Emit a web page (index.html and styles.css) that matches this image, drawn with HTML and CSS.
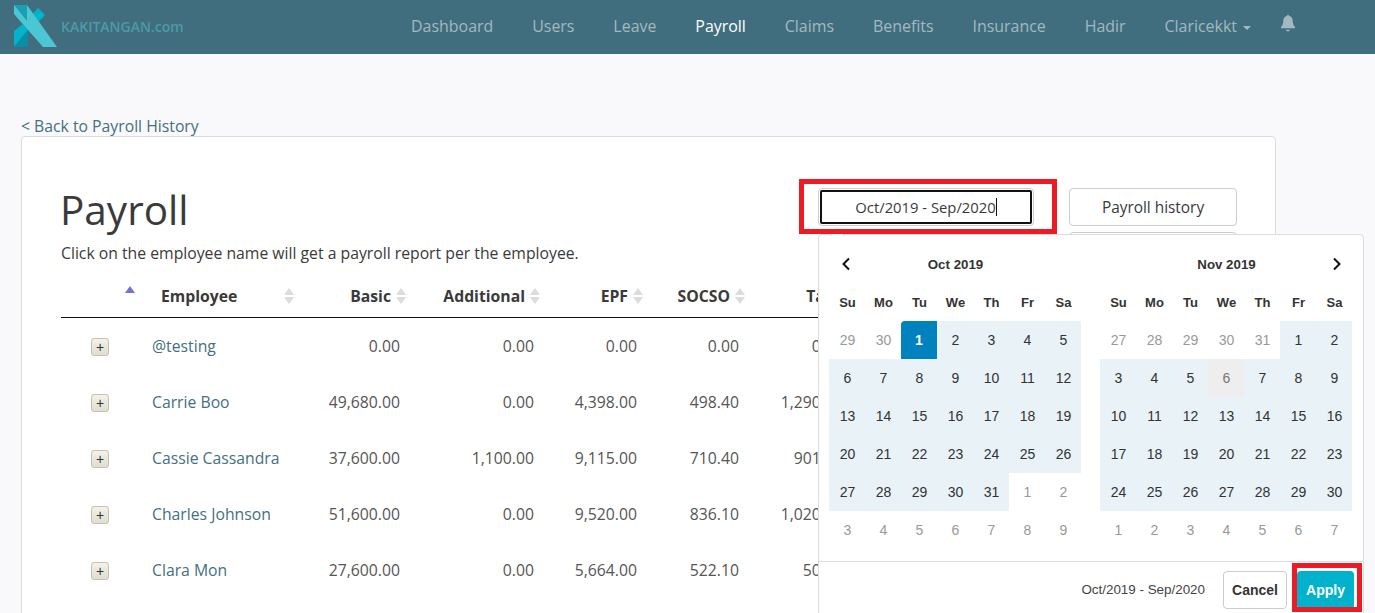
FILE: index.html
```html
<!DOCTYPE html>
<html lang="en">
<head>
<meta charset="utf-8">
<title>Payroll</title>
<link rel="stylesheet" href="styles.css">
</head>
<body>
<header class="nav">
  <a class="brand" href="#">
    <svg class="logo" width="44" height="44" viewBox="0 0 44 44" aria-hidden="true">
      <polygon fill="#00b4cd" points="24,3 31,10 19,23 13,15"/>
      <polygon fill="#00b4cd" points="0,26 9,19 14,25 0,42"/>
      <polygon fill="#0a8ea3" points="0,42 14,25 14,42"/>
      <polygon fill="#4cc6d3" points="0,0 13,0 43,42 29,42 0,9"/>
      <polygon fill="#1b9fb3" points="0,0 13,0 13,16"/>
    </svg>
    <span class="brand-text">KAKITANGAN.com</span>
  </a>
  <nav class="menu">
    <a href="#">Dashboard</a>
    <a href="#">Users</a>
    <a href="#">Leave</a>
    <a href="#" class="current">Payroll</a>
    <a href="#">Claims</a>
    <a href="#">Benefits</a>
    <a href="#">Insurance</a>
    <a href="#">Hadir</a>
    <a href="#" class="user">Claricekkt <i class="caret"></i></a>
    <a href="#" class="bell" aria-label="Notifications">
      <svg width="16" height="17" viewBox="0 0 16 17" aria-hidden="true"><path fill="#a3b9c1" d="M8 0c.7 0 1.2.5 1.2 1.1 2.2.5 3.3 2.2 3.5 4.6.2 2.800.6 4.600 2.300 6.300v1.200H1v-1.200c1.700-1.700 2.100-3.500 2.300-6.300.2-2.400 1.300-4.100 3.500-4.600C6.800.5 7.300 0 8 0zM5.800 14.700h4.400C10 15.600 9.100 16.200 8 16.200s-2-.6-2.200-1.500z"/></svg>
    </a>
  </nav>
</header>

<main class="page">
  <a class="back" href="#">&lt; Back to Payroll History</a>
  <section class="card">
    <div class="top">
      <div class="intro">
        <h1>Payroll</h1>
        <p>Click on the employee name will get a payroll report per the employee.</p>
      </div>
      <div class="range-wrap">
        <div class="range-input"><span>Oct/2019 - Sep/2020</span><i class="cursor"></i></div>
        <div class="red-box range-red"></div>
      </div>
      <div class="actions">
        <a class="btn" href="#">Payroll history</a>
        <a class="btn" href="#">&nbsp;</a>
      </div>
    </div>

    <table class="grid">
      <colgroup>
        <col class="c0"><col class="c1"><col class="c2"><col class="c3"><col class="c4"><col class="c5"><col class="c6">
      </colgroup>
      <thead>
        <tr>
          <th class="sort-first"><i class="tri"></i></th>
          <th class="emp"><div class="th"><span>Employee</span><i class="sort"></i></div></th>
          <th><div class="th"><span>Basic</span><i class="sort"></i></div></th>
          <th><div class="th"><span>Additional</span><i class="sort"></i></div></th>
          <th><div class="th"><span>EPF</span><i class="sort"></i></div></th>
          <th><div class="th"><span>SOCSO</span><i class="sort"></i></div></th>
          <th><div class="th"><span>Tax</span><i class="sort"></i></div></th>
        </tr>
      </thead>
      <tbody>
        <tr><td class="tg"><button class="plus">+</button></td><td class="name"><a href="#">@testing</a></td><td>0.00</td><td>0.00</td><td>0.00</td><td>0.00</td><td>0.00</td></tr>
        <tr><td class="tg"><button class="plus">+</button></td><td class="name"><a href="#">Carrie Boo</a></td><td>49,680.00</td><td>0.00</td><td>4,398.00</td><td>498.40</td><td>1,290.00</td></tr>
        <tr><td class="tg"><button class="plus">+</button></td><td class="name"><a href="#">Cassie Cassandra</a></td><td>37,600.00</td><td>1,100.00</td><td>9,115.00</td><td>710.40</td><td>901.00</td></tr>
        <tr><td class="tg"><button class="plus">+</button></td><td class="name"><a href="#">Charles Johnson</a></td><td>51,600.00</td><td>0.00</td><td>9,520.00</td><td>836.10</td><td>1,020.00</td></tr>
        <tr><td class="tg"><button class="plus">+</button></td><td class="name"><a href="#">Clara Mon</a></td><td>27,600.00</td><td>0.00</td><td>5,664.00</td><td>522.10</td><td>50.00</td></tr>
      </tbody>
    </table>

    <div class="picker">
      <div class="cals">
        <div class="cal">
          <div class="cal-head">
            <svg class="chev" width="12" height="14" viewBox="0 0 12 14" aria-hidden="true"><path d="M9 1.500 3.500 7 9 12.500" fill="none" stroke="#111" stroke-width="2"/></svg>
            <b class="month">Oct 2019</b>
          </div>
          <div class="days">
            <b>Su</b><b>Mo</b><b>Tu</b><b>We</b><b>Th</b><b>Fr</b><b>Sa</b>
            <span class="off">29</span><span class="off">30</span><span class="active">1</span><span class="in">2</span><span class="in">3</span><span class="in">4</span><span class="in">5</span>
            <span class="in">6</span><span class="in">7</span><span class="in">8</span><span class="in">9</span><span class="in">10</span><span class="in">11</span><span class="in">12</span>
            <span class="in">13</span><span class="in">14</span><span class="in">15</span><span class="in">16</span><span class="in">17</span><span class="in">18</span><span class="in">19</span>
            <span class="in">20</span><span class="in">21</span><span class="in">22</span><span class="in">23</span><span class="in">24</span><span class="in">25</span><span class="in">26</span>
            <span class="in">27</span><span class="in">28</span><span class="in">29</span><span class="in">30</span><span class="in">31</span><span class="off">1</span><span class="off">2</span>
            <span class="off">3</span><span class="off">4</span><span class="off">5</span><span class="off">6</span><span class="off">7</span><span class="off">8</span><span class="off">9</span>
          </div>
        </div>
        <div class="cal">
          <div class="cal-head">
            <b class="month">Nov 2019</b>
            <svg class="chev next" width="12" height="14" viewBox="0 0 12 14" aria-hidden="true"><path d="M3 1.500 8.500 7 3 12.500" fill="none" stroke="#111" stroke-width="2"/></svg>
          </div>
          <div class="days">
            <b>Su</b><b>Mo</b><b>Tu</b><b>We</b><b>Th</b><b>Fr</b><b>Sa</b>
            <span class="off">27</span><span class="off">28</span><span class="off">29</span><span class="off">30</span><span class="off">31</span><span class="in">1</span><span class="in">2</span>
            <span class="in">3</span><span class="in">4</span><span class="in">5</span><span class="today">6</span><span class="in">7</span><span class="in">8</span><span class="in">9</span>
            <span class="in">10</span><span class="in">11</span><span class="in">12</span><span class="in">13</span><span class="in">14</span><span class="in">15</span><span class="in">16</span>
            <span class="in">17</span><span class="in">18</span><span class="in">19</span><span class="in">20</span><span class="in">21</span><span class="in">22</span><span class="in">23</span>
            <span class="in">24</span><span class="in">25</span><span class="in">26</span><span class="in">27</span><span class="in">28</span><span class="in">29</span><span class="in">30</span>
            <span class="off">1</span><span class="off">2</span><span class="off">3</span><span class="off">4</span><span class="off">5</span><span class="off">6</span><span class="off">7</span>
          </div>
        </div>
      </div>
      <div class="foot">
        <span class="foot-range">Oct/2019 - Sep/2020</span>
        <button class="f-btn cancel">Cancel</button>
        <div class="apply-wrap">
          <button class="f-btn apply">Apply</button>
          <div class="red-box apply-red"></div>
        </div>
      </div>
    </div>
  </section>
</main>
</body>
</html>
```

FILE: styles.css
```css
* { box-sizing: border-box; }
html, body { height: 100%; overflow: hidden; }
body {
  margin: 0;
  background: #f9f9fb;
  color: #3a3a3a;
  font-family: "Open Sans", sans-serif;
  font-size: 15.750px;
  line-height: 20px;
}
a { text-decoration: none; color: #44707f; }

/* nav */
.nav {
  height: 54px;
  background: #406e7e;
  display: flex;
  align-items: flex-start;
  justify-content: space-between;
  padding: 0 79px 0 14px;
}
.brand { display: flex; align-items: flex-start; padding-top: 5px; }
.logo { display: block; }
.brand-text {
  margin: 12px 0 0 3px;
  color: #4c9aa9;
  font-size: 14px;
  font-weight: 600;
  line-height: 20px;
}
.menu { display: flex; gap: 38.900px; padding-top: 16px; font-size: 15.950px; }
.menu a { color: #a3b9c1; line-height: 20px; }
.menu a.current { color: #fff; font-weight: 500; }
.caret {
  display: inline-block;
  width: 0;
  height: 0;
  margin-left: 2px;
  vertical-align: middle;
  border-left: 4.500px solid transparent;
  border-right: 4.500px solid transparent;
  border-top: 4px solid #a3b9c1;
}
.menu a.user { margin-right: -10px; }
.bell { display: block; margin-top: -1px; }
.bell svg { display: block; }

/* page */
.page { padding: 62px 99px 0 21px; }
.back { display: block; height: 20px; }
.card {
  position: relative;
  background: #fff;
  border: 1px solid #dcdcdc;
  border-radius: 4px;
  padding: 51px 38px 40px 39px;
}
.top { display: flex; align-items: flex-start; height: 86px; }
.intro { flex: 1; }
h1 {
  margin: 0 0 0 -1px;
  font-size: 40.500px;
  font-weight: 400;
  line-height: 44px;
  color: #3a3a3a;
}
.intro p { margin: 11px 0 0; color: #3a3a3a; }
.range-wrap { position: relative; z-index: 2; width: 216px; margin-right: 35px; }
.range-input {
  height: 38px;
  border: 1px solid #ccc;
  border-radius: 4px;
  outline: 2px solid #111;
  outline-offset: -4px;
  display: flex;
  align-items: center;
  justify-content: center;
  color: #3a3a3a;
  font-size: 14.800px;
}
.cursor { width: 1px; height: 18px; background: #111; }
.red-box { position: absolute; border: 5px solid #ed1c24; pointer-events: none; }
.range-red { left: -19px; top: -9px; width: 258px; height: 55px; }
.actions { width: 168px; display: flex; flex-direction: column; gap: 6px; }
.btn {
  display: block;
  height: 38px;
  border: 1px solid #ccc;
  border-radius: 4px;
  background: #fff;
  color: #3a3a3a;
  font-size: 15.400px;
  line-height: 37px;
  text-align: center;
}

/* table */
.grid { table-layout: fixed; width: 789px; border-collapse: collapse; }
.c0 { width: 77px; }
.c1 { width: 172px; }
.c2 { width: 97px; }
.c3 { width: 134px; }
.c4 { width: 103px; }
.c5 { width: 102px; }
.c6 { width: 104px; }
th {
  height: 43px;
  padding: 2px 1px 0 0;
  border-bottom: 1px solid #111;
  font-weight: 700;
  color: #3a3a3a;
  vertical-align: middle;
}
.th { display: flex; align-items: center; justify-content: flex-end; gap: 5px; }
.emp { padding: 2px 16px 0 23px; }
.emp .th { justify-content: space-between; }
.sort-first { position: relative; }
.tri {
  position: absolute;
  right: 3px;
  top: 12px;
  border-left: 5px solid transparent;
  border-right: 5px solid transparent;
  border-bottom: 7px solid #6f74d8;
}
.sort { display: block; width: 10px; height: 16px; position: relative; }
.sort::before, .sort::after {
  content: "";
  position: absolute;
  left: 0;
  border-left: 5px solid transparent;
  border-right: 5px solid transparent;
}
.sort::before { top: 0; border-bottom: 7px solid #dcdcdc; }
.sort::after { bottom: 0; border-top: 7px solid #dcdcdc; }
td {
  height: 56px;
  padding: 2px 7px 0 0;
  text-align: right;
  color: #555;
  vertical-align: middle;
}
td.tg { padding: 4px 0 0; text-align: left; }
td.name { padding: 2px 0 0 14px; text-align: left; }
.plus {
  display: block;
  width: 18px;
  height: 18px;
  margin: 0 0 0 30px;
  padding: 0;
  border: 1px solid #c4c2b4;
  border-radius: 3px;
  background: linear-gradient(#f4f2ea, #e0ddcf);
  color: #333;
  font: 14px/15px "Liberation Sans", sans-serif;
}

/* date range picker */
.picker {
  position: absolute;
  z-index: 1;
  left: 796px;
  top: 97px;
  width: 546px;
  background: #fff;
  border: 1px solid #ddd;
  border-radius: 4px;
  font-family: "Liberation Sans", Arial, sans-serif;
  font-size: 14px;
  color: #333;
}
.picker::before {
  content: "";
  position: absolute;
  left: 13px;
  top: -5px;
  width: 10px;
  height: 10px;
  background: #fff;
  border: 1px solid #ddd;
  border-width: 1px 0 0 1px;
  transform: rotate(45deg);
}
.cals { display: flex; gap: 19px; padding: 10px 9px 12px 10px; position: relative; }
.cal { width: 252px; }
.cal-head { height: 38px; display: flex; align-items: center; position: relative; justify-content: center; }
.month { font-size: 13.300px; font-weight: 700; padding: 2px 0 0 1px; }
.chev { position: absolute; left: 11px; top: 12px; }
.chev.next { left: auto; right: 9px; }
.days { display: grid; grid-template-columns: repeat(7, 36px); grid-auto-rows: 38px; }
.days > * { display: flex; align-items: center; justify-content: center; padding-left: 1px; }
.days b { font-size: 13px; padding-top: 2px; }
.off { color: #999; }
.in { background: #e8f2f7; }
.today { background: #eee; color: #777; }
.days .active { background: #0082bf; color: #fff; font-weight: 700; border-radius: 4px 0 0 0; padding-left: 0; }
.foot {
  border-top: 1px solid #ddd;
  height: 60px;
  display: flex;
  align-items: flex-start;
  justify-content: flex-end;
  padding: 9px 9px 0 0;
}
.foot-range { margin: 9px 18px 0 0; color: #444; font-size: 13.400px; }
.f-btn {
  height: 38px;
  border-radius: 4px;
  font: 700 14px "Liberation Sans", Arial, sans-serif;
  padding: 0;
}
.cancel { width: 64px; background: #fff; border: 1px solid #ccc; color: #333; }
.apply-wrap { position: relative; margin-left: 10px; }
.apply { display: block; width: 57px; background: #00b2cc; border: 0; color: #fff; }
.apply-red { left: -5px; top: -8px; width: 70px; height: 49px; }
```
